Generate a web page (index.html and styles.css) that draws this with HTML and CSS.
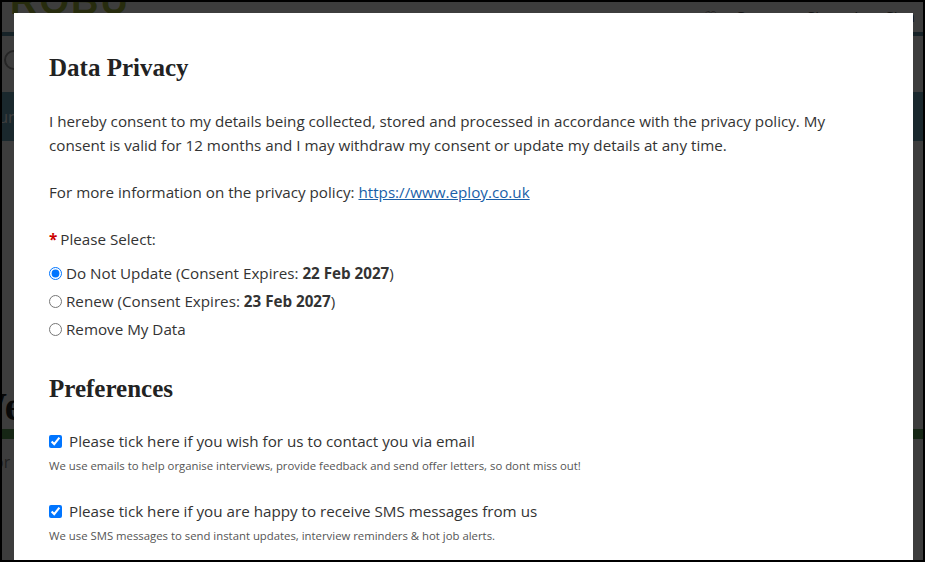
FILE: index.html
```html
<!DOCTYPE html>
<html lang="en">
<head>
    <meta charset="UTF-8">
    <meta name="viewport" content="width=device-width, initial-scale=1.0">
    <title>Data Privacy</title>
    <link rel="stylesheet" href="styles.css">
</head>
<body>
    <div class="frame">
        <!-- page behind the dialog -->
        <div class="page">
            <div class="header">
                <span class="logo">ROBU</span>
                <span class="top-links">&#9825; Careers Sign In Sign Up</span>
            </div>
            <div class="strip"></div>
            <div class="search-row"><span class="search-icon"></span></div>
            <div class="nav-band"><span class="nav-text">Jun</span></div>
            <div class="hero"></div>
            <h2 class="page-title">Welcome</h2>
            <div class="green-bar"></div>
            <p class="page-text">or</p>
        </div>

        <div class="backdrop"></div>

        <div class="modal">
            <h1 class="modal-title">Data Privacy</h1>

            <p class="text">I hereby consent to my details being collected, stored and processed in accordance with the privacy policy. My consent is valid for 12 months and I may withdraw my consent or update my details at any time.</p>

            <p class="text">For more information on the privacy policy: <a href="#" class="link">https://www.eploy.co.uk</a></p>

            <p class="label"><span class="required">*</span>Please Select:</p>

            <div class="radio-list">
                <label class="radio-row">
                    <input type="radio" name="consent" checked>
                    <span>Do Not Update (Consent Expires: <b>22 Feb 2027</b>)</span>
                </label>
                <label class="radio-row">
                    <input type="radio" name="consent">
                    <span>Renew (Consent Expires: <b>23 Feb 2027</b>)</span>
                </label>
                <label class="radio-row">
                    <input type="radio" name="consent">
                    <span>Remove My Data</span>
                </label>
            </div>

            <h1 class="modal-title section">Preferences</h1>

            <div class="pref">
                <label class="check-row">
                    <input type="checkbox" checked>
                    <span>Please tick here if you wish for us to contact you via email</span>
                </label>
                <p class="hint">We use emails to help organise interviews, provide feedback and send offer letters, so dont miss out!</p>
            </div>

            <div class="pref">
                <label class="check-row">
                    <input type="checkbox" checked>
                    <span>Please tick here if you are happy to receive SMS messages from us</span>
                </label>
                <p class="hint">We use SMS messages to send instant updates, interview reminders &amp; hot job alerts.</p>
            </div>
        </div>
    </div>
</body>
</html>
```

FILE: styles.css
```css
* {
    margin: 0;
    padding: 0;
    box-sizing: border-box;
}

html, body {
    height: 100%;
}

body {
    font-family: "Open Sans", "Noto Sans", Arial, sans-serif;
    background: #000;
    overflow: hidden;
}

.frame {
    position: relative;
    height: 562px;
    border: 2px solid #000;
    overflow: hidden;
    background: #fff;
}

/* ---------- page behind ---------- */

.header {
    display: flex;
    justify-content: space-between;
    align-items: flex-start;
    height: 30px;
    padding: 0 10px 0 8px;
}

.logo {
    font-family: "Liberation Sans", Arial, sans-serif;
    font-weight: bold;
    font-size: 38px;
    line-height: 26px;
    margin-top: -14px;
    color: #a3b83c;
    letter-spacing: 2px;
}

.top-links {
    font-size: 15px;
    color: #555;
    padding-top: 4px;
    margin-right: -40px;
    word-spacing: 14px;
}

.strip {
    height: 4px;
    background: #5e8fa5;
}

.search-row {
    height: 56px;
    padding: 14px 0 0 2px;
}

.search-icon {
    display: block;
    width: 20px;
    height: 20px;
    border: 2px solid #999;
    border-radius: 50%;
}

.nav-band {
    height: 49px;
    background: #6da6bd;
    padding: 14px 0 0 0;
}

.nav-text {
    color: #fff;
    font-size: 16px;
    margin-left: -8px;
}

.hero {
    height: 246px;
}

.page-title {
    font-family: "Liberation Serif", serif;
    font-size: 40px;
    color: #222;
    margin-left: -35px;
    line-height: 40px;
}

.green-bar {
    height: 10px;
    margin-top: 2px;
    background: #5c9d59;
}

.page-text {
    font-size: 16px;
    color: #888;
    margin: 12px 0 0 -8px;
}

.backdrop {
    position: absolute;
    inset: 0;
    background: rgba(0, 0, 0, 0.76);
}

/* ---------- dialog ---------- */

.modal {
    position: absolute;
    top: 11px;
    left: 12px;
    width: 899px;
    height: 560px;
    background: #fff;
    padding: 40px 35px 0 35px;
    color: #333;
}

.modal-title {
    font-family: "Liberation Serif", "DejaVu Serif", serif;
    font-weight: bold;
    font-size: 25px;
    line-height: 30px;
    color: #222;
    margin-bottom: 26px;
}

.modal-title.section {
    margin-top: 31px;
    margin-bottom: 25px;
}

.text {
    font-size: 15.2px;
    line-height: 24px;
    margin-bottom: 23px;
}

.link {
    color: #1a5fa8;
}

.label {
    font-size: 15.2px;
    line-height: 24px;
    margin-top: 3px;
    margin-bottom: 8px;
}

.required {
    color: #c00;
    margin-right: 3px;
    font-weight: bold;
}

.radio-list {
    display: flex;
    flex-direction: column;
}

.radio-row {
    display: flex;
    align-items: center;
    gap: 4px;
    height: 28px;
    font-size: 15.2px;
}

.radio-row input {
    width: 13px;
    height: 13px;
    margin: 0;
}

.check-row {
    display: flex;
    align-items: center;
    gap: 7px;
    font-size: 15.2px;
    line-height: 24px;
}

.check-row input {
    width: 13px;
    height: 13px;
    margin: 0;
}

.pref {
    margin-bottom: 26px;
}

.hint {
    font-size: 11.35px;
    color: #555;
    margin-top: 5px;
}
```
